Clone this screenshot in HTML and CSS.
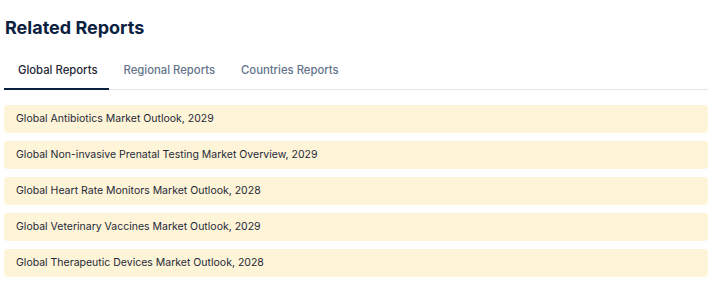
FILE: index.html
```html
<!DOCTYPE html>
<html>
<head>
    <title>Related Reports</title>
    <link rel="stylesheet" href="styles.css">
</head>
<body>
    <div class="related">
        <h2 class="related__title">Related Reports</h2>
        <div class="tabs">
            <a href="#" class="tabs__item tabs__item--active">Global Reports</a>
            <a href="#" class="tabs__item">Regional Reports</a>
            <a href="#" class="tabs__item">Countries Reports</a>
        </div><!-- end tabs -->
        <ul class="reports">
            <li><a href="#">Global Antibiotics Market Outlook, 2029</a></li>
            <li><a href="#">Global Non-invasive Prenatal Testing Market Overview, 2029</a></li>
            <li><a href="#">Global Heart Rate Monitors Market Outlook, 2028</a></li>
            <li><a href="#">Global Veterinary Vaccines Market Outlook, 2029</a></li>
            <li><a href="#">Global Therapeutic Devices Market Outlook, 2028</a></li>
        </ul>
    </div><!-- end related -->
</body>
</html>
```

FILE: styles.css
```css
html, body {
    margin: 0;
    font-family: Inter, 'Open Sans', sans-serif;
    background: #fff;
}

.related {
    padding: 15px 6px 0 4px;
}

.related__title {
    margin: 0 0 0 1px;
    font-size: 18px;
    line-height: 26px;
    font-weight: 700;
    color: #0b2140;
}

.tabs {
    display: flex;
    margin-top: 13px;
    border-bottom: 1px solid #e5e7eb;
}

.tabs__item {
    padding: 8px 12px 10px 14px;
    font-size: 11.3px;
    line-height: 16px;
    font-weight: 500;
    color: #64748b;
    text-decoration: none;
    border-bottom: 2px solid transparent;
    margin-bottom: -1px;
}

.tabs__item--active {
    color: #1f2937;
    border-bottom-color: #0b2140;
}

.reports {
    list-style: none;
    margin: 15px 0 0;
    padding: 0;
    display: flex;
    flex-direction: column;
    gap: 8px;
}

.reports a {
    display: block;
    padding: 6px 12px;
    font-size: 10.5px;
    line-height: 16px;
    color: #1f2937;
    text-decoration: none;
    background: #fef4d8;
    border-radius: 4px;
}
```
